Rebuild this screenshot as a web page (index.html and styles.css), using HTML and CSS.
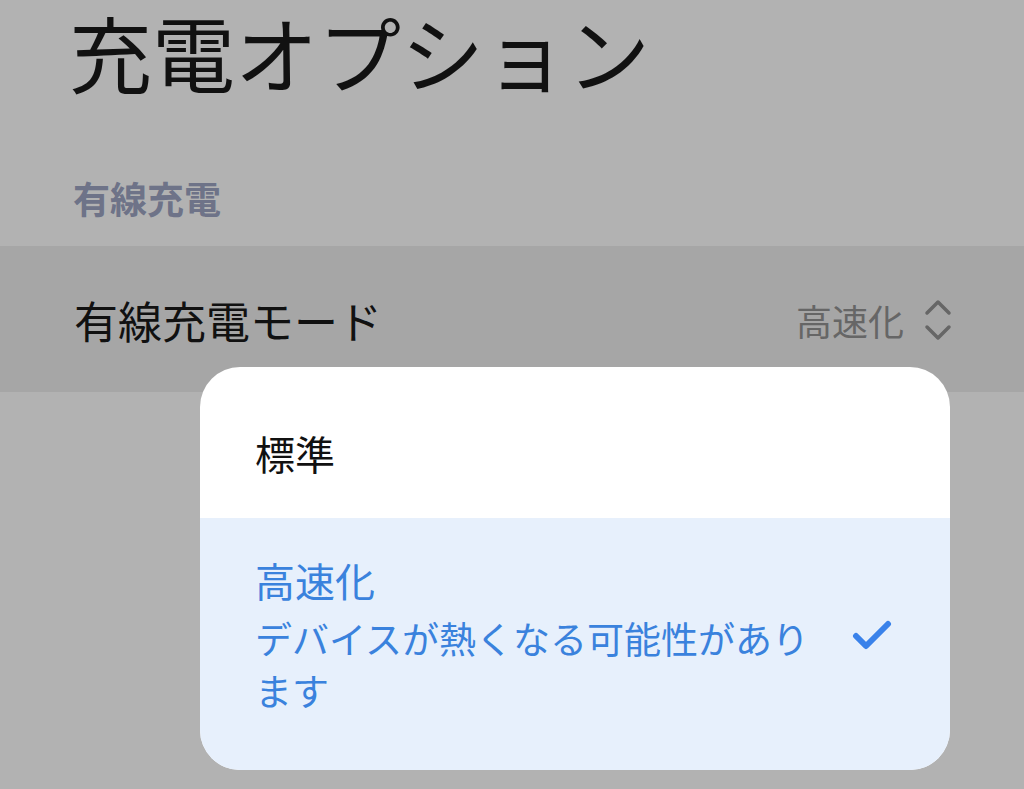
FILE: index.html
```html
<!DOCTYPE html>
<html lang="ja">
<head>
  <meta charset="UTF-8">
  <title>充電オプション</title>
  <link rel="stylesheet" href="styles.css">
</head>
<body>
  <header class="page-header">
    <h1>充電オプション</h1>
  </header>

  <section class="settings-group">
    <h2 class="group-title">有線充電</h2>
    <div class="setting-row">
      <span class="setting-label">有線充電モード</span>
      <span class="setting-value">
        高速化
        <svg class="updown-icon" viewBox="0 0 28 44" width="28" height="44">
          <path d="M3 15 L14 4 L25 15" />
          <path d="M3 29 L14 40 L25 29" />
        </svg>
      </span>
    </div>
  </section>

  <!-- dropdown opened from the row above -->
  <div class="mode-menu">
    <div class="menu-option">
      <span class="option-title">標準</span>
    </div>
    <div class="menu-option selected">
      <div class="option-text">
        <span class="option-title">高速化</span>
        <span class="option-desc">デバイスが熱くなる可能性があります</span>
      </div>
      <svg class="check-icon" viewBox="0 0 40 32" width="40" height="32">
        <path d="M4 17 L14 27 L36 5" />
      </svg>
    </div>
  </div>
</body>
</html>
```

FILE: styles.css
```css
body {
  font-family: "Noto Sans CJK JP", "Noto Sans", sans-serif;
  background-color: #b2b2b2;
  margin: 0;
  padding: 0;
  width: 1024px;
  height: 789px;
  overflow: hidden;
  position: relative;
}

.page-header {
  padding: 10px 0 0 69px;
  height: 132px;
  box-sizing: border-box;
}

.page-header h1 {
  font-size: 83px;
  font-weight: 400;
  line-height: 1;
  margin: 0;
  color: #111;
}

.group-title {
  font-size: 37px;
  font-weight: 700;
  color: #6e7388;
  line-height: 1;
  margin: 0 0 0 73px;
  height: 114px;
  padding-top: 48px;
  box-sizing: border-box;
}

.setting-row {
  display: flex;
  justify-content: space-between;
  align-items: center;
  height: 146px;
  padding: 0 72px 0 74px;
  background-color: #a6a6a6;
}

.setting-label {
  font-size: 44px;
  color: #111;
  padding-top: 2px;
}

.setting-value {
  display: flex;
  align-items: center;
  gap: 20px;
  font-size: 36px;
  color: #666;
  padding-top: 2px;
}

.updown-icon path {
  fill: none;
  stroke: #666;
  stroke-width: 3.5;
  stroke-linecap: round;
  stroke-linejoin: round;
}

.mode-menu {
  position: absolute;
  left: 200px;
  top: 367px;
  width: 750px;
  height: 403px;
  border-radius: 40px;
  overflow: hidden;
  background-color: #fff;
  display: flex;
  flex-direction: column;
}

.menu-option {
  display: flex;
  align-items: center;
  justify-content: space-between;
  padding: 20px 56px 0 55px;
  height: 151px;
  box-sizing: border-box;
}

.menu-option .option-title {
  font-size: 40px;
  color: #111;
}

.menu-option.selected {
  flex: 1;
  background-color: #e7f0fc;
  padding-top: 0;
  padding-bottom: 18px;
}

.option-text {
  display: flex;
  flex-direction: column;
  width: 565px;
}

.selected .option-title {
  color: #3a82dd;
  line-height: 52px;
}

.option-desc {
  font-size: 37px;
  color: #3a82dd;
  line-height: 52px;
  margin-top: 6px;
}

.check-icon {
  margin-right: 2px;
}

.check-icon path {
  fill: none;
  stroke: #3a82ea;
  stroke-width: 6;
  stroke-linecap: round;
  stroke-linejoin: round;
}
```
